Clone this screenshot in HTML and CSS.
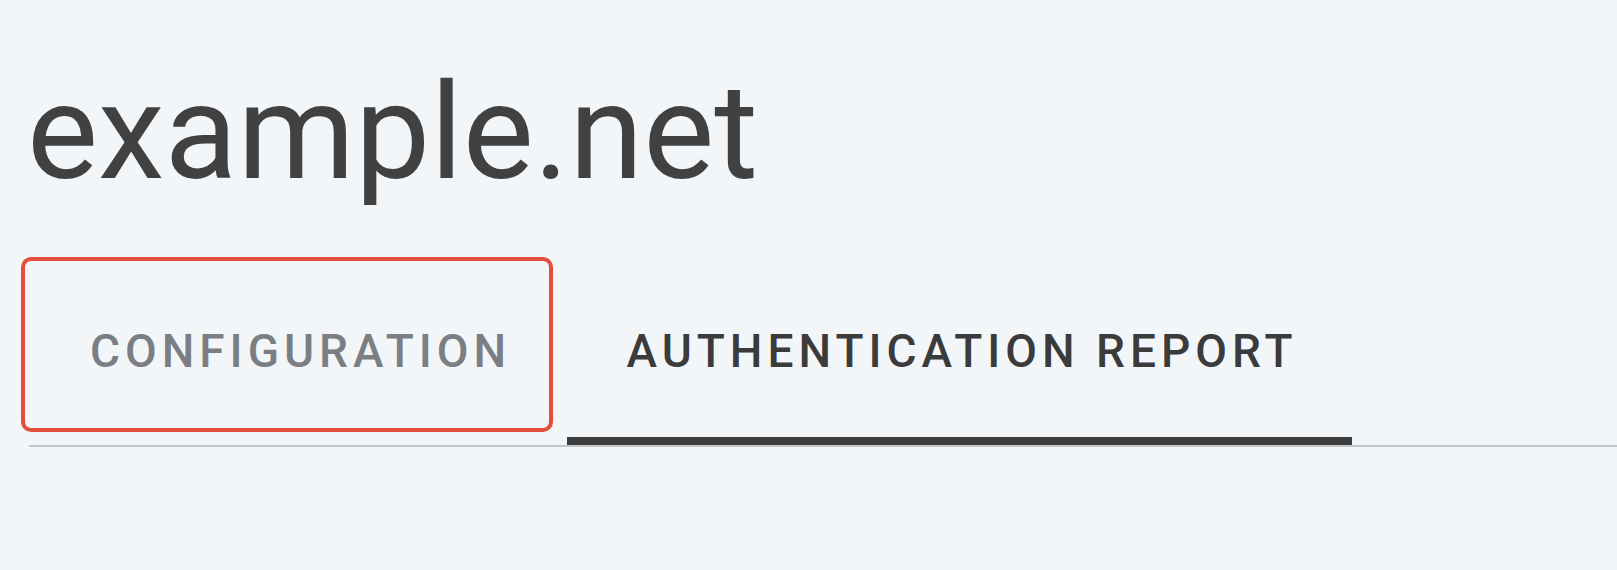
FILE: index.html
```html
<!DOCTYPE html>
<html lang="en">
<head>
  <meta charset="UTF-8" />
  <meta name="viewport" content="width=device-width, initial-scale=1.0"/>
  <title>example.net</title>
  <link rel="stylesheet" href="styles.css">
</head>
<body>
  <div class="header">
    <h1 class="domain">example.net</h1>
  </div>

  <div class="tabs">
    <button class="tab focused">Configuration</button>
    <button class="tab active">Authentication Report</button>
  </div>
</body>
</html>
```

FILE: styles.css
```css
* {
  margin: 0;
  padding: 0;
  box-sizing: border-box;
}

body {
  background: #f3f6f9;
  font-family: Roboto, 'Noto Sans', sans-serif;
  color: #404040;
  overflow: hidden;
}

.header {
  padding: 54px 0 0 27px;
}

.domain {
  font-size: 134px;
  font-weight: 400;
  line-height: 157px;
  color: #414141;
}

.tabs {
  display: flex;
  margin: 45px 0 0 29px;
  border-bottom: 2px solid #c4c7ca;
}

.tab {
  position: relative;
  height: 189px;
  display: flex;
  align-items: center;
  justify-content: center;
  padding-left: 5px;
  background: none;
  border: none;
  font-family: inherit;
  font-size: 46px;
  font-weight: 500;
  letter-spacing: 5px;
  text-transform: uppercase;
  color: #7b7f84;
}

.tab:first-child {
  width: 538px;
}

.tab:last-child {
  width: 785px;
}

.tab.active {
  color: #3b3b3b;
}

/* selected tab underline */
.tab.active::after {
  content: '';
  position: absolute;
  left: 0;
  right: 0;
  bottom: 0;
  height: 8px;
  background: #3d3d3d;
}

/* highlight box round the first tab */
.tab.focused::before {
  content: '';
  position: absolute;
  left: -8px;
  top: 1px;
  right: 14px;
  bottom: 13px;
  border: 4px solid #e2503b;
  border-radius: 10px;
}
```
